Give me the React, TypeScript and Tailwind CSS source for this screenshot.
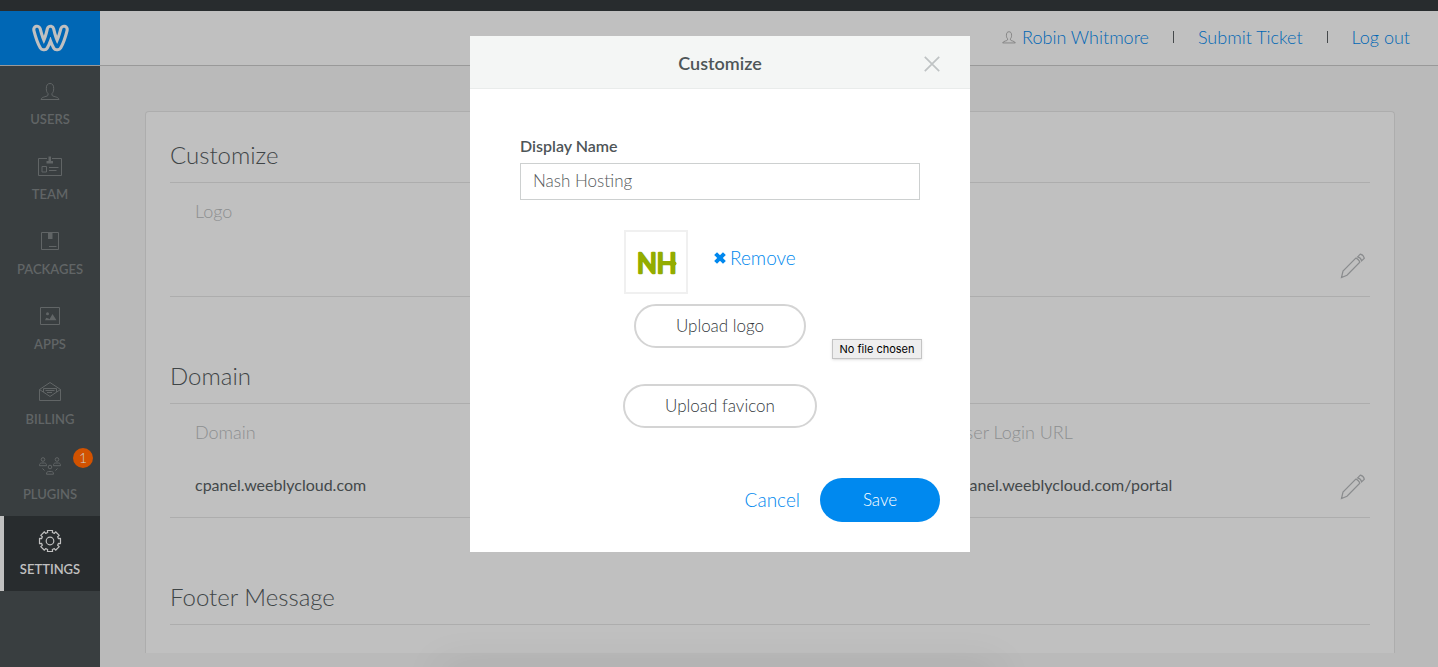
import type { ReactNode } from "react";

function UserIcon({ className }: { className: string }) {
  return (
    <svg viewBox="4 3 20 20" className={className} fill="none" stroke="currentColor" aria-hidden="true">
      <path d="M12 15.5v1.6c0 1.6-6.6 1.4-7 4.4h18c-.4-3-7-2.8-7-4.4v-1.6c1.2-1.1 1.7-2.6 1.7-5 0-3.4-1.3-5-3.7-5s-3.7 1.6-3.7 5c0 2.4.5 3.9 1.7 5z" />
    </svg>
  );
}

function NavSvg({ children }: { children: ReactNode }) {
  return (
    <svg viewBox="0 0 28 28" className="h-7 w-7" fill="none" stroke="currentColor" aria-hidden="true">
      {children}
    </svg>
  );
}

function gearPath(cx: number, cy: number, outer: number, inner: number, teeth: number) {
  const step = (Math.PI * 2) / teeth;
  const points: string[] = [];
  for (let i = 0; i < teeth; i++) {
    const a = i * step - Math.PI / 2;
    const corners: [number, number][] = [
      [inner, -0.27],
      [outer, -0.24],
      [outer, 0.24],
      [inner, 0.27],
    ];
    for (const [r, d] of corners) {
      points.push(`${(cx + r * Math.cos(a + d)).toFixed(2)} ${(cy + r * Math.sin(a + d)).toFixed(2)}`);
    }
  }
  return `M${points.join("L")}Z`;
}

function Pencil() {
  return (
    <svg viewBox="0 0 26 26" className="h-[26px] w-[26px]" fill="none" stroke="currentColor" strokeWidth="1.2" aria-hidden="true">
      <path d="M1.5 24.5 3 18 15.8 5.2c1.5.2 3.8 2.5 4 4L7 22.2zM17.6 3.9 20.3 1.2c1.8.4 3.6 2.2 4 4L21.6 7.9c-.4-1.8-2.2-3.6-4-4z" />
    </svg>
  );
}

const navItems: { label: string; icon: ReactNode; badge?: string; active?: boolean }[] = [
  {
    label: "USERS",
    icon: (
      <NavSvg>
        <path d="M12 15.5v1.6c0 1.6-6.6 1.4-7 4.4h18c-.4-3-7-2.8-7-4.4v-1.6c1.2-1.1 1.7-2.6 1.7-5 0-3.4-1.3-5-3.7-5s-3.7 1.6-3.7 5c0 2.4.5 3.9 1.7 5z" />
      </NavSvg>
    ),
  },
  {
    label: "TEAM",
    icon: (
      <NavSvg>
        <path d="M11 5.5H2.500v17h23v-17H16" />
        <path d="M6 13.500h4.500v5.500H6zM13 14.500h9.500M13 17.500h7.500" />
        <path d="M12.500 3.500H15V8h2v2.500h-6.500V8h2z" fill="currentColor" stroke="none" />
      </NavSvg>
    ),
  },
  {
    label: "PACKAGES",
    icon: (
      <NavSvg>
        <path d="M5.5 4.5h17v17h-17zM13 18.5h7.5" />
        <path d="M12 4.5h4.5V11H12z" fill="currentColor" stroke="none" />
      </NavSvg>
    ),
  },
  {
    label: "APPS",
    icon: (
      <NavSvg>
        <path d="M4.5 4.5h19v17h-19z" />
        <path d="M9 17.3l1.200-2.600 2.300.9 1 .6 3-5.200 4 6.300z" fill="currentColor" stroke="none" />
        <circle cx="11.5" cy="10.8" r="1.5" fill="currentColor" stroke="none" />
      </NavSvg>
    ),
  },
  {
    label: "BILLING",
    icon: (
      <NavSvg>
        <path d="M3.5 11.5 14 4.5l10.5 7v11h-21zM3.5 11.500 14 18.500l10.500-7M7.500 14v-3.500h13V14M9.500 12.500h9M11 14.500h5" />
      </NavSvg>
    ),
  },
  {
    label: "PLUGINS",
    badge: "1",
    icon: (
      <NavSvg>
        <circle cx="7" cy="6.5" r="1.8" />
        <circle cx="21" cy="6.5" r="1.8" />
        <circle cx="14" cy="14" r="1.8" />
        <path d="M3.5 12.7c0-2 .8-2.700 2-2.700h3c1.200 0 2 .7 2 2.700zM17.500 12.700c0-2 .8-2.700 2-2.700h3c1.200 0 2 .7 2 2.700zM10.500 21.200c0-2 .8-2.700 2-2.700h3c1.200 0 2 .7 2 2.700zM6.500 15.500l2 2M21.500 15.500l-2 2" />
      </NavSvg>
    ),
  },
  {
    label: "SETTINGS",
    active: true,
    icon: (
      <NavSvg>
        <path d={gearPath(14, 13, 10.8, 8.8, 8)} strokeWidth="1.2" strokeLinejoin="round" />
        <circle cx="14" cy="13" r="3.8" strokeWidth="1.2" />
      </NavSvg>
    ),
  },
];

function Sidebar() {
  return (
    <nav className="w-[100px] shrink-0 bg-[#393e40]" aria-label="Main">
      {navItems.map((item) => (
        <a
          key={item.label}
          href={`#${item.label.toLowerCase()}`}
          className={
            item.active
              ? "relative flex h-[75px] flex-col items-center gap-[3px] border-l-4 border-[#c0c0c0] bg-[#282c2e] pt-3 pr-1 text-[#c0c0c0]"
              : "relative flex h-[75px] flex-col items-center gap-[3px] pt-3 text-[#616566]"
          }
        >
          {item.icon}
          <span className="text-[13px] leading-5 font-semibold">{item.label}</span>
          {item.badge && (
            <span className="absolute top-[7px] right-[7px] flex h-5 w-5 items-center justify-center rounded-full bg-[#d25200] text-sm font-light text-[#d0d0d0]">
              {item.badge}
            </span>
          )}
        </a>
      ))}
    </nav>
  );
}

const logoStroke =
  "M7 6.500c1.500 6 3.400 12 6.200 17h1.200C17 19 19.200 12.500 20.500 6.500c1.300 6 3.500 12.500 6.100 17h1.200c2.800-5 4.700-11 6.200-17";

function Header() {
  return (
    <header className="flex h-[55px] items-center border-b border-[#999999] bg-[#c0c0c0]">
      <a href="#home" aria-label="Home" className="flex h-full w-[100px] shrink-0 items-center justify-center bg-[#0067b5]">
        <svg viewBox="0 0 40 30" className="h-[30px] w-10" fill="none" strokeLinecap="round" strokeLinejoin="round" aria-hidden="true">
          <path d={logoStroke} stroke="#c0c0c0" strokeWidth="9.6" />
          <path d={logoStroke} stroke="#0067b5" strokeWidth="3.4" />
        </svg>
      </a>
      <div className="ml-auto flex items-center gap-6 pr-7 pb-0.5 text-lg leading-6 font-light text-[#0067b5]">
        <a href="#account" className="flex items-center gap-1.5">
          <UserIcon className="h-[14px] w-[14px] text-[#707070]" />
          Robin Whitmore
        </a>
        <span className="h-3 w-px bg-[#45494b]" />
        <a href="#ticket">Submit Ticket</a>
        <span className="h-3 w-px bg-[#45494b]" />
        <a href="#logout">Log out</a>
      </div>
    </header>
  );
}

function SectionTitle({ children }: { children: ReactNode }) {
  return (
    <h2 className="flex h-[71px] items-center border-b border-[#adadad] pt-4 text-2xl font-light text-[#3f4547]">
      {children}
    </h2>
  );
}

function SettingsRow({ label, children }: { label: string; children: ReactNode }) {
  return (
    <div className="mb-9 flex h-[114px] items-end border-b border-[#adadad] pr-1 pl-[25px]">
      <div className="mr-2 grid flex-1 grid-cols-3 self-start pt-4">{children}</div>
      <button type="button" aria-label={`Edit ${label}`} className="mb-[17px] text-[#8a8c8e]">
        <Pencil />
      </button>
    </div>
  );
}

function Field({ name, value }: { name: string; value?: string }) {
  return (
    <div>
      <div className="text-lg leading-6 font-light text-[#8d8f90]">{name}</div>
      {value && <div className="mt-[29px] text-base leading-6 text-[#43484a]">{value}</div>}
    </div>
  );
}

const uploadButton =
  "h-11 rounded-full border-2 border-[#d4d4d4] px-10 text-[17px] font-light text-[#33393c]";

function CustomizeDialog() {
  return (
    <div role="dialog" aria-modal="true" aria-labelledby="dialog-title" className="w-[500px] bg-white">
      <div className="relative flex h-[53px] items-center justify-center border-b border-[#e9eceb] bg-[#f4f6f5] pt-0.5">
        <h1 id="dialog-title" className="text-lg font-semibold text-[#4e5558]">
          Customize
        </h1>
        <button type="button" aria-label="Close" className="absolute top-5 right-[30px]">
          <svg viewBox="0 0 16 16" className="h-4 w-4" stroke="#bfc3c4" strokeWidth="1.7" aria-hidden="true">
            <path d="M.8.8l14.4 14.4M15.2.8.8 15.2" />
          </svg>
        </button>
      </div>

      <form className="flex flex-col pt-[45px] pb-[30px]" onSubmit={(e) => e.preventDefault()}>
        <div className="flex flex-col gap-[5px] px-[50px]">
          <label htmlFor="display-name" className="text-base leading-6 font-semibold text-[#4e5558]">
            Display Name
          </label>
          <input
            id="display-name"
            type="text"
            defaultValue="Nash Hosting"
            className="h-[37px] border border-[#cdd0d0] px-3 pb-0.5 text-[17px] font-light text-[#55595b] outline-none"
          />
        </div>

        <div className="mt-[30px] flex items-start gap-[26px] pl-[154px]">
          <div className="flex h-16 w-16 items-center justify-center border-2 border-[#f0f0f0]">
            <svg viewBox="0 0 60 60" className="h-[60px] w-[60px]" role="img" aria-label="Nash Hosting logo">
              <text x="11" y="41" fontSize="26" fontWeight="400" fill="#93ac00" stroke="#93ac00" strokeWidth="2.4" strokeLinejoin="round">
                NH
              </text>
              <path d="M45 31.5h3.500" stroke="#93ac00" strokeWidth="4" strokeLinecap="round" />
            </svg>
          </div>
          <button type="button" className="mt-4 flex items-center gap-1 text-[19px] leading-6 font-light text-[#0088ee]">
            <svg viewBox="0 0 12 12" className="h-3 w-3" stroke="currentColor" strokeWidth="4" aria-hidden="true">
              <path d="M1.6 1.6l8.8 8.8M10.400 1.600l-8.800 8.800" />
            </svg>
            Remove
          </button>
        </div>

        <div className="relative mt-2.5 flex justify-center">
          <button type="button" className={uploadButton}>
            Upload logo
          </button>
          <span
            role="tooltip"
            className="absolute top-[35px] left-[362px] flex h-5 w-[90px] items-center justify-center border border-[#c4c4c4] bg-[#eeeeee] font-[Inter,sans-serif] text-[11px] whitespace-nowrap text-black shadow-sm"
          >
            No file chosen
          </span>
        </div>
        <div className="mt-9 flex justify-center">
          <button type="button" className={uploadButton}>
            Upload favicon
          </button>
        </div>

        <div className="mt-[50px] flex items-center justify-end gap-5 pr-[30px]">
          <button type="button" className="text-[19px] leading-6 font-light text-[#0088ee]">
            Cancel
          </button>
          <button type="submit" className="h-11 w-[120px] rounded-full bg-[#0089ef] text-[17px] font-light text-white">
            Save
          </button>
        </div>
      </form>
    </div>
  );
}

export default function App() {
  return (
    <div className="relative flex min-h-screen flex-col overflow-hidden bg-[#bababa] font-[Lato,sans-serif]">
      <div className="h-[11px] bg-[#282c2e]" />
      <Header />
      <div className="flex flex-1">
        <Sidebar />
        <main className="flex-1 pt-[45px] pr-[43px] pl-[45px]">
          <div className="rounded-t-sm border border-b-0 border-[#adadad] bg-[#c0c0c0] px-6 pb-7">
            <SectionTitle>Customize</SectionTitle>
            <SettingsRow label="logo">
              <Field name="Logo" />
            </SettingsRow>
            <SectionTitle>Domain</SectionTitle>
            <SettingsRow label="domain">
              <Field name="Domain" value="cpanel.weeblycloud.com" />
              <span />
              <Field name="User Login URL" value="cpanel.weeblycloud.com/portal" />
            </SettingsRow>
            <SectionTitle>Footer Message</SectionTitle>
          </div>
        </main>
      </div>
      <div className="absolute inset-0 flex items-start justify-center pt-9 pl-0.5">
        <CustomizeDialog />
      </div>
      <div className="absolute -bottom-5 left-1/2 h-5 w-[560px] -translate-x-1/2 shadow-[0_0_40px_rgba(0,0,0,0.1)]" />
    </div>
  );
}
